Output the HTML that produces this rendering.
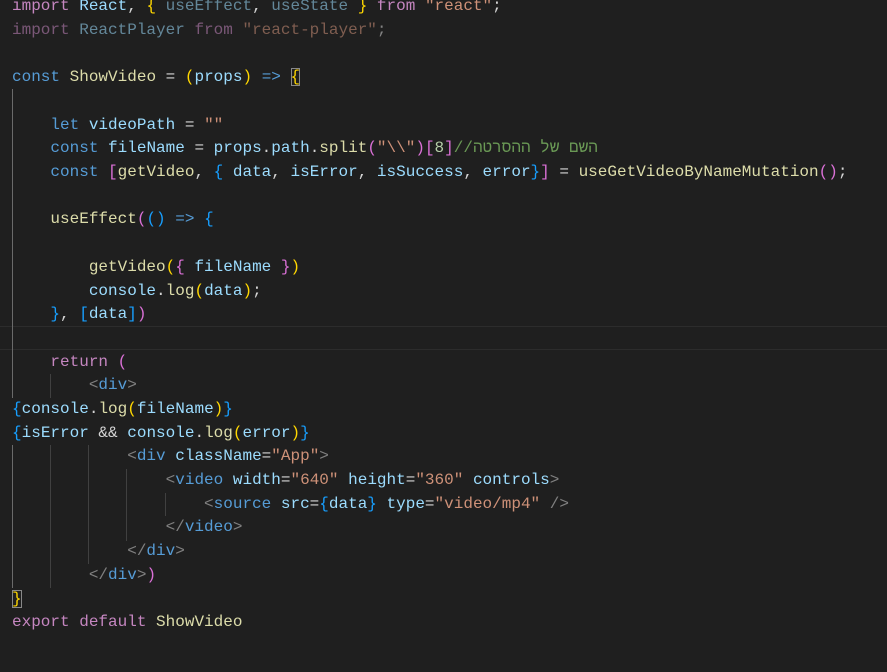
<!DOCTYPE html>
<html><head><meta charset="utf-8"><style>
body{margin:0;background:#1f1f1f;width:887px;height:672px;overflow:hidden;position:relative;font-family:"Liberation Mono",monospace;font-size:16px}
.l{position:absolute;left:12px;height:23.65px;line-height:23.65px;white-space:pre;color:#d4d4d4;margin-top:2px}
.k{color:#569cd6}.c{color:#c586c0}.v{color:#9cdcfe}.f{color:#dcdcaa}.s{color:#ce9178}.n{color:#b5cea8}.g{color:#ffd700}.p{color:#da70d6}.b{color:#179fff}.t{color:#808080}.m{color:#6a9955}.cl{color:#4ec9b0}
.d{opacity:.55}
.gd{position:absolute;width:1px;background:#404040}
.cur{position:absolute;left:0;right:0;top:326px;height:22px;border-top:1px solid #2c2c2c;border-bottom:1px solid #2c2c2c}
.box{outline:1px solid #888;outline-offset:-1px}
</style></head><body>
<div class="cur"></div>
<div class="gd" style="left:12px;top:89px;height:309px;background:#6a6a6a"></div>
<div class="gd" style="left:12px;top:445px;height:143px;background:#6a6a6a"></div>
<div class="gd" style="left:50px;top:374px;height:24px"></div>
<div class="gd" style="left:50px;top:445px;height:143px"></div>
<div class="gd" style="left:88px;top:445px;height:119px"></div>
<div class="gd" style="left:126px;top:469px;height:72px"></div>
<div class="gd" style="left:165px;top:493px;height:23px"></div>

<div class="l" style="top:-7px"><span class="c">import</span> <span class="v">React</span>, <span class="g">{</span> <span class="d v">useEffect</span>, <span class="d v">useState</span> <span class="g">}</span> <span class="c">from</span> <span class="s">"react"</span>;</div>
<div class="l d" style="top:17px"><span class="c">import</span> <span class="v">ReactPlayer</span> <span class="c">from</span> <span class="s">"react-player"</span>;</div>
<div class="l" style="top:64px"><span class="k">const</span> <span class="f">ShowVideo</span> = <span class="g">(</span><span class="v">props</span><span class="g">)</span> <span class="k">=&gt;</span> <span class="g box">{</span></div>
<div class="l" style="top:112px">    <span class="k">let</span> <span class="v">videoPath</span> = <span class="s">""</span></div>
<div class="l" style="top:135px">    <span class="k">const</span> <span class="v">fileName</span> = <span class="v">props</span>.<span class="v">path</span>.<span class="f">split</span><span class="p">(</span><span class="s">"\\"</span><span class="p">)</span><span class="p">[</span><span class="n">8</span><span class="p">]</span><span class="m">//</span><span class="m" style="font-family:'Liberation Mono','DejaVu Sans Mono',monospace">השם של ההסרטה</span></div>
<div class="l" style="top:159px">    <span class="k">const</span> <span class="p">[</span><span class="f">getVideo</span>, <span class="b">{</span> <span class="v">data</span>, <span class="v">isError</span>, <span class="v">isSuccess</span>, <span class="v">error</span><span class="b">}</span><span class="p">]</span> = <span class="f">useGetVideoByNameMutation</span><span class="p">()</span>;</div>
<div class="l" style="top:206px">    <span class="f">useEffect</span><span class="p">(</span><span class="b">()</span> <span class="k">=&gt;</span> <span class="b">{</span></div>
<div class="l" style="top:254px">        <span class="f">getVideo</span><span class="g">(</span><span class="p">{</span> <span class="v">fileName</span> <span class="p">}</span><span class="g">)</span></div>
<div class="l" style="top:278px">        <span class="v">console</span>.<span class="f">log</span><span class="g">(</span><span class="v">data</span><span class="g">)</span>;</div>
<div class="l" style="top:301px">    <span class="b">}</span>, <span class="b">[</span><span class="v">data</span><span class="b">]</span><span class="p">)</span></div>
<div class="l" style="top:349px">    <span class="c">return</span> <span class="p">(</span></div>
<div class="l" style="top:372px">        <span class="t">&lt;</span><span class="k">div</span><span class="t">&gt;</span></div>
<div class="l" style="top:396px"><span class="b">{</span><span class="v">console</span>.<span class="f">log</span><span class="g">(</span><span class="v">fileName</span><span class="g">)</span><span class="b">}</span></div>
<div class="l" style="top:420px"><span class="b">{</span><span class="v">isError</span> &amp;&amp; <span class="v">console</span>.<span class="f">log</span><span class="g">(</span><span class="v">error</span><span class="g">)</span><span class="b">}</span></div>
<div class="l" style="top:443px">            <span class="t">&lt;</span><span class="k">div</span> <span class="v">className</span>=<span class="s">"App"</span><span class="t">&gt;</span></div>
<div class="l" style="top:467px">                <span class="t">&lt;</span><span class="k">video</span> <span class="v">width</span>=<span class="s">"640"</span> <span class="v">height</span>=<span class="s">"360"</span> <span class="v">controls</span><span class="t">&gt;</span></div>
<div class="l" style="top:491px">                    <span class="t">&lt;</span><span class="k">source</span> <span class="v">src</span>=<span class="b">{</span><span class="v">data</span><span class="b">}</span> <span class="v">type</span>=<span class="s">"video/mp4"</span> <span class="t">/&gt;</span></div>
<div class="l" style="top:514px">                <span class="t">&lt;/</span><span class="k">video</span><span class="t">&gt;</span></div>
<div class="l" style="top:538px">            <span class="t">&lt;/</span><span class="k">div</span><span class="t">&gt;</span></div>
<div class="l" style="top:562px">        <span class="t">&lt;/</span><span class="k">div</span><span class="t">&gt;</span><span class="p">)</span></div>
<div class="l" style="top:586px"><span class="g box">}</span></div>
<div class="l" style="top:609px"><span class="c">export</span> <span class="c">default</span> <span class="f">ShowVideo</span></div>
</body></html>
